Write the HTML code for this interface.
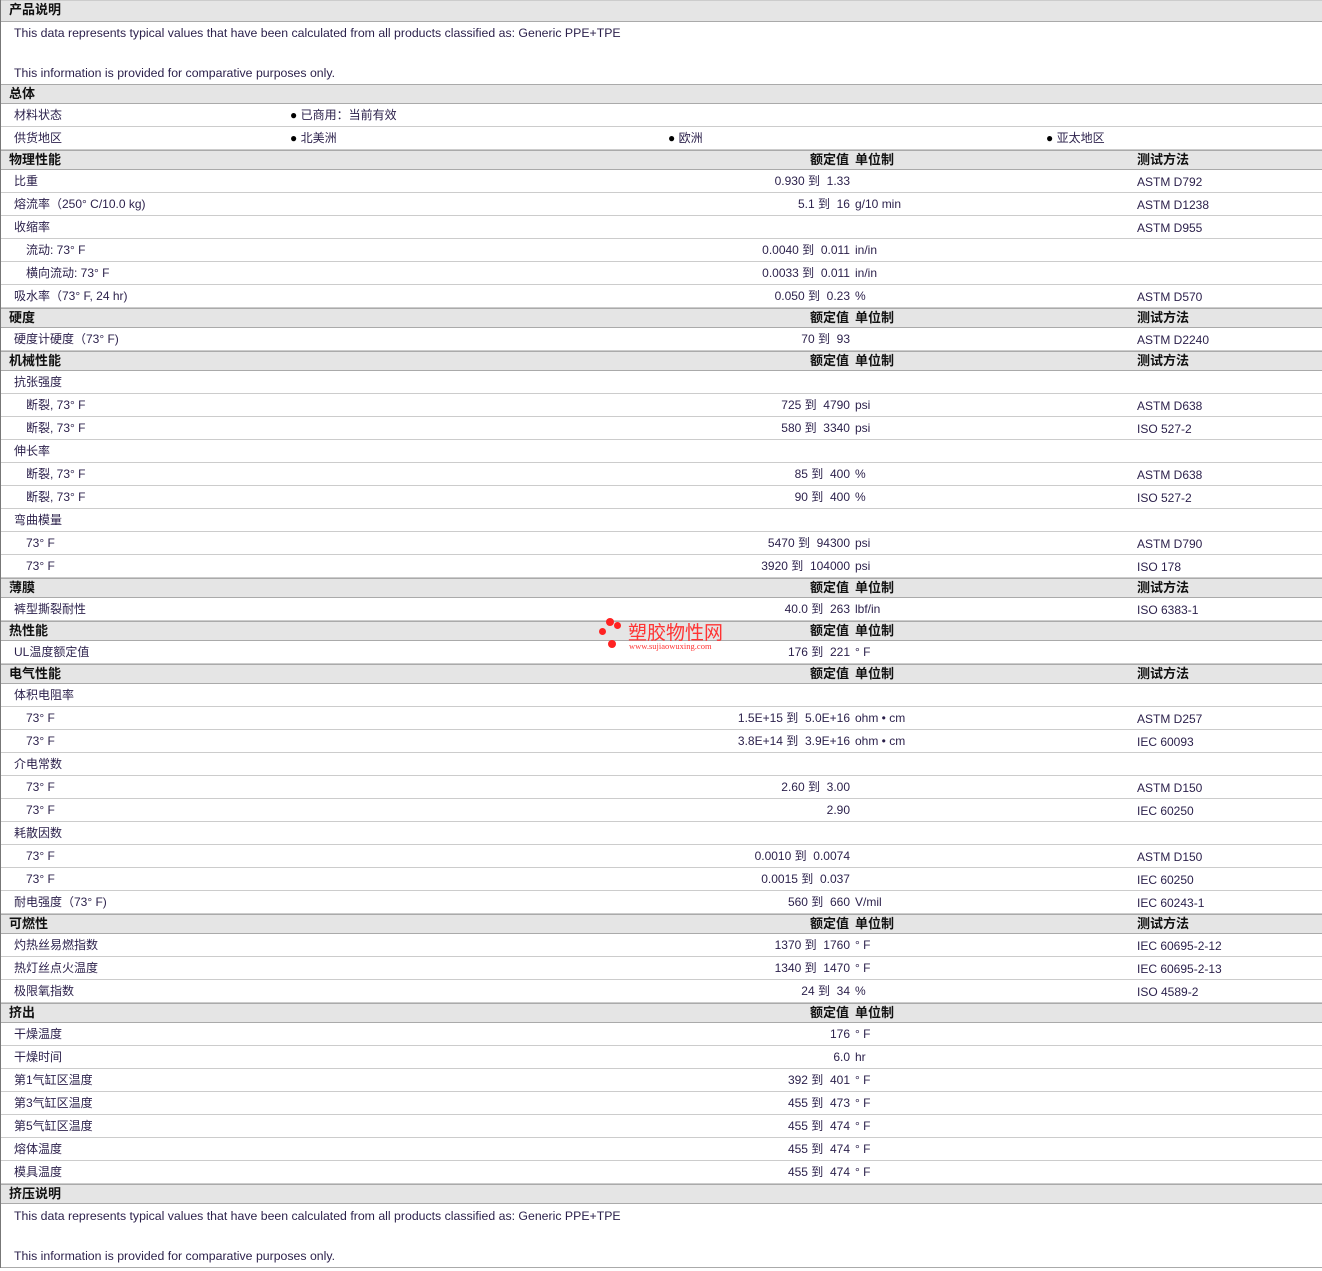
<!DOCTYPE html>
<html><head><meta charset="utf-8"><style>
body{margin:0;background:#fff;font-family:"Liberation Sans","Noto Sans CJK SC",sans-serif;font-size:12px;color:#2a1f4a;}
#w{position:relative;width:1321px;border-left:1px solid #777;}
.h,.r,.d{position:relative;box-sizing:border-box;}
.h{height:20px;background:#e5e5e5;border-top:1px solid #aaa;border-bottom:1px solid #aaa;font-weight:bold;font-size:13px;color:#111;}
.h span{position:absolute;top:1px;line-height:16px;}
.r{height:23px;border-bottom:1px solid #ccc;}
.r span{position:absolute;top:3px;line-height:16px;white-space:nowrap;}
.r span.m{top:4px}
.d{height:62px;}
.d div{position:absolute;left:13px;font-size:12.3px;line-height:16px;}
.l{left:13px}.s{left:25px}
.v{right:472px;text-align:right}
.u{left:854px}
.m{left:1136px}
.hv{right:473px}.hu{left:854px}.hm{left:1136px}
.b{color:#000}
</style></head><body><div id="w">
<div class="h" style="height:22px;border-top:1px solid #ccc"><span style="left:8px">产品说明</span></div>
<div class="d"><div style="top:3px">This data represents typical values that have been calculated from all products classified as: Generic PPE+TPE</div><div style="top:43px">This information is provided for comparative purposes only.</div></div>
<div class="h"><span style="left:8px">总体</span></div>
<div class="r"><span class="l">材料状态</span><span style="left:289px"><b class="b">●</b> 已商用：当前有效</span></div>
<div class="r"><span class="l">供货地区</span><span style="left:289px"><b class="b">●</b> 北美洲</span><span style="left:667px"><b class="b">●</b> 欧洲</span><span style="left:1045px"><b class="b">●</b> 亚太地区</span></div>
<div class="h"><span style="left:8px">物理性能</span><span class="hv">额定值</span><span class="hu">单位制</span><span class="hm">测试方法</span></div>
<div class="r"><span class="l">比重</span><span class="v">0.930 到&nbsp; 1.33</span><span class="m">ASTM D792</span></div>
<div class="r"><span class="l">熔流率（250° C/10.0 kg)</span><span class="v">5.1 到&nbsp; 16</span><span class="u">g/10 min</span><span class="m">ASTM D1238</span></div>
<div class="r"><span class="l">收缩率</span><span class="m">ASTM D955</span></div>
<div class="r"><span class="s">流动: 73° F</span><span class="v">0.0040 到&nbsp; 0.011</span><span class="u">in/in</span></div>
<div class="r"><span class="s">横向流动: 73° F</span><span class="v">0.0033 到&nbsp; 0.011</span><span class="u">in/in</span></div>
<div class="r"><span class="l">吸水率（73° F, 24 hr)</span><span class="v">0.050 到&nbsp; 0.23</span><span class="u">%</span><span class="m">ASTM D570</span></div>
<div class="h"><span style="left:8px">硬度</span><span class="hv">额定值</span><span class="hu">单位制</span><span class="hm">测试方法</span></div>
<div class="r"><span class="l">硬度计硬度（73° F)</span><span class="v">70 到&nbsp; 93</span><span class="m">ASTM D2240</span></div>
<div class="h"><span style="left:8px">机械性能</span><span class="hv">额定值</span><span class="hu">单位制</span><span class="hm">测试方法</span></div>
<div class="r"><span class="l">抗张强度</span></div>
<div class="r"><span class="s">断裂, 73° F</span><span class="v">725 到&nbsp; 4790</span><span class="u">psi</span><span class="m">ASTM D638</span></div>
<div class="r"><span class="s">断裂, 73° F</span><span class="v">580 到&nbsp; 3340</span><span class="u">psi</span><span class="m">ISO 527-2</span></div>
<div class="r"><span class="l">伸长率</span></div>
<div class="r"><span class="s">断裂, 73° F</span><span class="v">85 到&nbsp; 400</span><span class="u">%</span><span class="m">ASTM D638</span></div>
<div class="r"><span class="s">断裂, 73° F</span><span class="v">90 到&nbsp; 400</span><span class="u">%</span><span class="m">ISO 527-2</span></div>
<div class="r"><span class="l">弯曲模量</span></div>
<div class="r"><span class="s">73° F</span><span class="v">5470 到&nbsp; 94300</span><span class="u">psi</span><span class="m">ASTM D790</span></div>
<div class="r"><span class="s">73° F</span><span class="v">3920 到&nbsp; 104000</span><span class="u">psi</span><span class="m">ISO 178</span></div>
<div class="h"><span style="left:8px">薄膜</span><span class="hv">额定值</span><span class="hu">单位制</span><span class="hm">测试方法</span></div>
<div class="r"><span class="l">裤型撕裂耐性</span><span class="v">40.0 到&nbsp; 263</span><span class="u">lbf/in</span><span class="m">ISO 6383-1</span></div>
<div class="h"><span style="left:8px">热性能</span><span class="hv">额定值</span><span class="hu">单位制</span></div>
<div class="r"><span class="l">UL温度额定值</span><span class="v">176 到&nbsp; 221</span><span class="u">° F</span></div>
<div class="h"><span style="left:8px">电气性能</span><span class="hv">额定值</span><span class="hu">单位制</span><span class="hm">测试方法</span></div>
<div class="r"><span class="l">体积电阻率</span></div>
<div class="r"><span class="s">73° F</span><span class="v">1.5E+15 到&nbsp; 5.0E+16</span><span class="u">ohm • cm</span><span class="m">ASTM D257</span></div>
<div class="r"><span class="s">73° F</span><span class="v">3.8E+14 到&nbsp; 3.9E+16</span><span class="u">ohm • cm</span><span class="m">IEC 60093</span></div>
<div class="r"><span class="l">介电常数</span></div>
<div class="r"><span class="s">73° F</span><span class="v">2.60 到&nbsp; 3.00</span><span class="m">ASTM D150</span></div>
<div class="r"><span class="s">73° F</span><span class="v">2.90</span><span class="m">IEC 60250</span></div>
<div class="r"><span class="l">耗散因数</span></div>
<div class="r"><span class="s">73° F</span><span class="v">0.0010 到&nbsp; 0.0074</span><span class="m">ASTM D150</span></div>
<div class="r"><span class="s">73° F</span><span class="v">0.0015 到&nbsp; 0.037</span><span class="m">IEC 60250</span></div>
<div class="r"><span class="l">耐电强度（73° F)</span><span class="v">560 到&nbsp; 660</span><span class="u">V/mil</span><span class="m">IEC 60243-1</span></div>
<div class="h"><span style="left:8px">可燃性</span><span class="hv">额定值</span><span class="hu">单位制</span><span class="hm">测试方法</span></div>
<div class="r"><span class="l">灼热丝易燃指数</span><span class="v">1370 到&nbsp; 1760</span><span class="u">° F</span><span class="m">IEC 60695-2-12</span></div>
<div class="r"><span class="l">热灯丝点火温度</span><span class="v">1340 到&nbsp; 1470</span><span class="u">° F</span><span class="m">IEC 60695-2-13</span></div>
<div class="r"><span class="l">极限氧指数</span><span class="v">24 到&nbsp; 34</span><span class="u">%</span><span class="m">ISO 4589-2</span></div>
<div class="h"><span style="left:8px">挤出</span><span class="hv">额定值</span><span class="hu">单位制</span></div>
<div class="r"><span class="l">干燥温度</span><span class="v">176</span><span class="u">° F</span></div>
<div class="r"><span class="l">干燥时间</span><span class="v">6.0</span><span class="u">hr</span></div>
<div class="r"><span class="l">第1气缸区温度</span><span class="v">392 到&nbsp; 401</span><span class="u">° F</span></div>
<div class="r"><span class="l">第3气缸区温度</span><span class="v">455 到&nbsp; 473</span><span class="u">° F</span></div>
<div class="r"><span class="l">第5气缸区温度</span><span class="v">455 到&nbsp; 474</span><span class="u">° F</span></div>
<div class="r"><span class="l">熔体温度</span><span class="v">455 到&nbsp; 474</span><span class="u">° F</span></div>
<div class="r"><span class="l">模具温度</span><span class="v">455 到&nbsp; 474</span><span class="u">° F</span></div>
<div class="h"><span style="left:8px">挤压说明</span></div>
<div class="d" style="border-bottom:1px solid #aaa;height:64px"><div style="top:4px">This data represents typical values that have been calculated from all products classified as: Generic PPE+TPE</div><div style="top:44px">This information is provided for comparative purposes only.</div></div>
<div style="position:absolute;left:598px;top:618px;width:130px;height:36px;">
<div style="position:absolute;left:7px;top:0;width:8px;height:8px;border-radius:50%;background:#f22"></div>
<div style="position:absolute;left:15px;top:4px;width:7px;height:7px;border-radius:50%;background:#f22"></div>
<div style="position:absolute;left:0;top:10px;width:7px;height:7px;border-radius:50%;background:#f22"></div>
<div style="position:absolute;left:9px;top:22px;width:8px;height:8px;border-radius:50%;background:#f22"></div>
<div style="position:absolute;left:29px;top:0px;font-size:19px;color:#f33;white-space:nowrap">塑胶物性网</div>
<div style="position:absolute;left:30px;top:23px;font-size:8.5px;color:#f33;font-family:'Liberation Serif',serif;white-space:nowrap">www.sujiaowuxing.com</div>
</div>
</div></body></html>
